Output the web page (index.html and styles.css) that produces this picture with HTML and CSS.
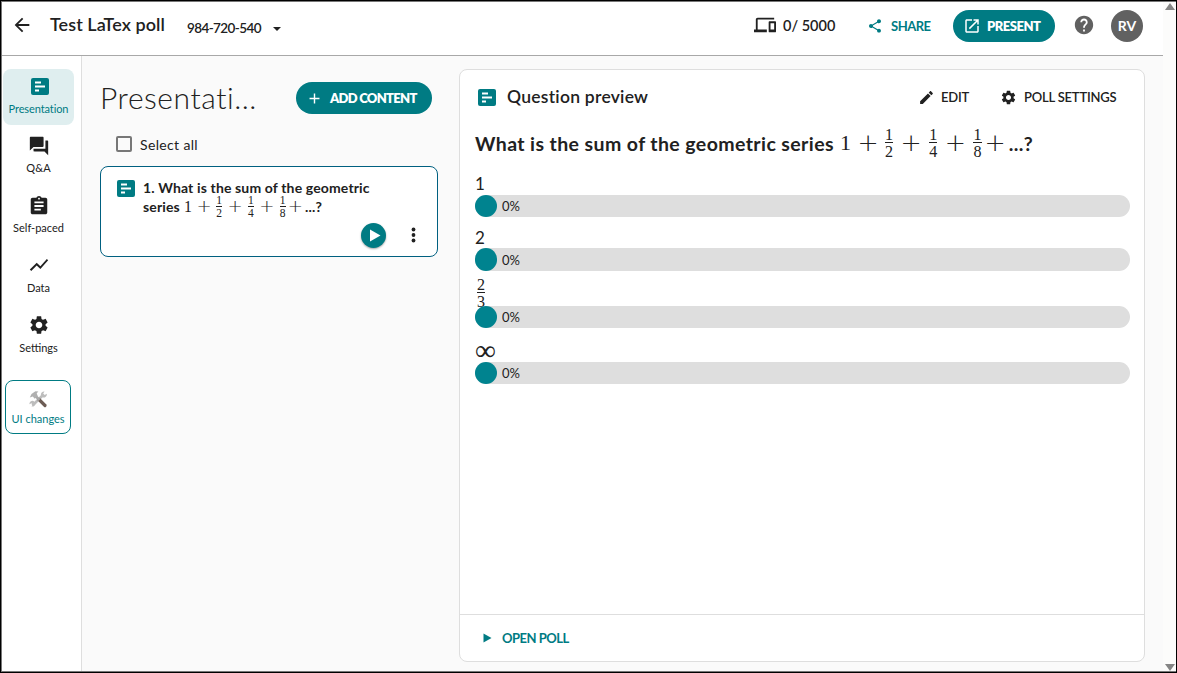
FILE: index.html
```html
<!DOCTYPE html>
<html lang="en">
<head>
  <meta charset="UTF-8" />
  <meta name="viewport" content="width=device-width, initial-scale=1.0"/>
  <title>Test LaTex poll</title>
  <link rel="stylesheet" href="styles.css">
</head>
<body>
  <!-- shared icon shapes -->
  <svg class="sprite" width="0" height="0">
    <symbol id="i-poll" viewBox="0 0 18 17"><rect width="18" height="17" rx="2" fill="currentColor"/><path d="M4 4.5h6M4 8.5h10M4 12.5h4" stroke="#fff" stroke-width="1.8"/></symbol>
    <symbol id="i-gear" viewBox="0 0 24 24"><path fill="currentColor" d="M19.14 12.94c.04-.3.06-.61.06-.94 0-.32-.02-.64-.07-.94l2.03-1.58c.18-.14.23-.41.12-.61l-1.92-3.32c-.12-.22-.37-.29-.59-.22l-2.39.96c-.5-.38-1.03-.7-1.62-.94l-.36-2.54c-.04-.24-.24-.41-.48-.41h-3.84c-.24 0-.43.17-.47.41l-.36 2.54c-.59.24-1.13.57-1.62.94l-2.39-.96c-.22-.08-.47 0-.59.22L2.74 8.87c-.12.21-.08.47.12.61l2.03 1.58c-.05.3-.09.63-.09.94s.02.64.07.94l-2.03 1.58c-.18.14-.23.41-.12.61l1.92 3.32c.12.22.37.29.59.22l2.39-.96c.5.38 1.03.7 1.62.94l.36 2.54c.05.24.24.41.48.41h3.84c.24 0 .44-.17.47-.41l.36-2.54c.59-.24 1.13-.56 1.62-.94l2.39.96c.22.08.47 0 .59-.22l1.92-3.32c.12-.22.07-.47-.12-.61l-2.01-1.58zM12 15.6c-1.98 0-3.6-1.62-3.6-3.6s1.62-3.6 3.6-3.6 3.6 1.62 3.6 3.6-1.62 3.6-3.6 3.6z"/></symbol>
  </svg>

  <div class="window">
    <div class="page">
      <header class="topbar">
        <svg class="back" width="22" height="22" viewBox="0 0 24 24"><path d="M20 11H7.83l5.59-5.59L12 4l-8 8 8 8 1.41-1.41L7.83 13H20z"/></svg>
        <h1 class="poll-name">Test LaTex poll</h1>
        <span class="poll-code">984-720-540</span>
        <span class="caret"></span>
        <div class="top-actions">
          <svg class="devices" width="22" height="22" viewBox="0 0 24 24"><path d="M4 6h18V4H4c-1.1 0-2 .9-2 2v11H0v3h14v-3H4V6zm19 2h-6c-.55 0-1 .45-1 1v10c0 .55.45 1 1 1h6c.55 0 1-.45 1-1V9c0-.55-.45-1-1-1zm-1 9h-4v-7h4v7z"/></svg>
          <span class="count">0/ 5000</span>
          <svg class="share-icon" width="16" height="16" viewBox="0 0 24 24"><path d="M18 16.08c-.76 0-1.44.3-1.96.77L8.91 12.7c.05-.23.09-.46.09-.7s-.04-.47-.09-.7l7.05-4.11c.54.5 1.25.81 2.04.81 1.66 0 3-1.34 3-3s-1.34-3-3-3-3 1.34-3 3c0 .24.04.47.09.7L8.04 9.81C7.5 9.31 6.79 9 6 9c-1.66 0-3 1.34-3 3s1.34 3 3 3c.79 0 1.5-.31 2.04-.81l7.12 4.16c-.05.21-.08.43-.08.65 0 1.61 1.31 2.92 2.92 2.92s2.92-1.31 2.92-2.92-1.31-2.92-2.92-2.92z"/></svg>
          <span class="share">SHARE</span>
          <button class="pill present">
            <svg width="18" height="18" viewBox="0 0 24 24"><path d="M19 19H5V5h7V3H5c-1.11 0-2 .9-2 2v14c0 1.1.89 2 2 2h14c1.1 0 2-.9 2-2v-7h-2v7zM14 3v2h3.59l-9.83 9.83 1.41 1.41L19 6.41V10h2V3h-7z"/></svg>
            <span>PRESENT</span>
          </button>
          <svg class="help" width="22" height="22" viewBox="0 0 24 24"><path d="M12 2C6.48 2 2 6.48 2 12s4.48 10 10 10 10-4.48 10-10S17.52 2 12 2zm1 17h-2v-2h2v2zm2.07-7.75l-.9.92C13.45 12.9 13 13.5 13 15h-2v-.5c0-1.1.45-2.1 1.17-2.83l1.24-1.26c.37-.36.59-.86.59-1.41 0-1.1-.9-2-2-2s-2 .9-2 2H8c0-2.21 1.79-4 4-4s4 1.79 4 4c0 .88-.36 1.68-.93 2.25z"/></svg>
          <span class="avatar">RV</span>
        </div>
      </header>

      <div class="body">
        <nav class="sidebar">
          <a class="nav-item active"><svg width="18" height="17"><use href="#i-poll"/></svg><span>Presentation</span></a>
          <a class="nav-item"><svg width="22" height="22" viewBox="0 0 24 24"><path d="M21 6h-2v9H6v2c0 .55.45 1 1 1h11l4 4V7c0-.55-.45-1-1-1zm-4 6V3c0-.55-.45-1-1-1H3c-.55 0-1 .45-1 1v14l4-4h10c.55 0 1-.45 1-1z"/></svg><span>Q&amp;A</span></a>
          <a class="nav-item"><svg width="22" height="22" viewBox="0 0 24 24"><path d="M19 3h-4.18C14.4 1.84 13.3 1 12 1c-1.3 0-2.4.84-2.82 2H5c-1.1 0-2 .9-2 2v14c0 1.1.9 2 2 2h14c1.1 0 2-.9 2-2V5c0-1.1-.9-2-2-2zm-7 0c.55 0 1 .45 1 1s-.45 1-1 1-1-.45-1-1 .45-1 1-1zm2 14H7v-2h7v2zm3-4H7v-2h10v2zm0-4H7V7h10v2z"/></svg><span>Self-paced</span></a>
          <a class="nav-item high"><svg width="22" height="22" viewBox="0 0 24 24"><path d="M3.5 18.49l6-6.01 4 4L22 6.92l-1.41-1.41-7.09 7.97-4-4L2 16.99z"/></svg><span>Data</span></a>
          <a class="nav-item high"><svg width="22" height="22"><use href="#i-gear"/></svg><span>Settings</span></a>
          <a class="ui-changes">
            <svg width="19" height="18" viewBox="0 0 19 18">
              <path d="M3.5 15.5L14 5" stroke="#bdbdbd" stroke-width="2.6"/>
              <path d="M12 5.5a3.2 3.2 0 0 1 3.5-4l-1.3 2 1.5 1.5 2.1-1.2a3.2 3.2 0 0 1-4 3.6zM6 12.5a3 3 0 0 1-3.5 4l1.2-1.8L2.4 13.3l-1.9.9a3 3 0 0 1 4-3.3z" fill="#bdbdbd"/>
              <path d="M10 9.500l6 6" stroke="#6d5d55" stroke-width="3.2" stroke-linecap="round"/>
              <path d="M6 5.500l4.500 4.500" stroke="#a9a9a9" stroke-width="2.6"/>
              <path d="M.8 7.600L2.500 4 6.400 1.200l3 .3-1.700 1.800 1 2.700-3 2.700-1.900-2.200z" fill="#b0b0b0"/>
            </svg>
            <span>UI changes</span>
          </a>
        </nav>

        <section class="slides">
          <div class="slides-head">
            <h2>Presentati...</h2>
            <button class="pill add"><svg width="17" height="17" viewBox="0 0 24 24"><path d="M19 13h-6v6h-2v-6H5v-2h6V5h2v6h6z"/></svg><span>ADD CONTENT</span></button>
          </div>
          <label class="select-all"><span class="box"></span><span class="select-text">Select all</span></label>
          <article class="slide">
            <svg class="poll-icon" width="18" height="17"><use href="#i-poll"/></svg>
            <div class="slide-title">
              <p class="line-one">1. What is the sum of the geometric</p>
              <div class="formula-line">
                <span class="line-two">series</span>
                <span class="math">
                  <span class="num">1</span><span class="op first">+</span>
                  <span class="frac"><span>1</span><span>2</span></span><span class="op">+</span>
                  <span class="frac"><span>1</span><span>4</span></span><span class="op">+</span>
                  <span class="frac"><span>1</span><span>8</span></span><span class="op last">+</span>
                </span>
                <span>...?</span>
              </div>
            </div>
            <div class="slide-actions">
              <span class="play"><svg width="25" height="25" viewBox="0 0 25 25"><path d="M9 6.500v12l10.500-6z"/></svg></span>
              <svg class="dots" width="5" height="16" viewBox="0 0 5 16"><circle cx="2.5" cy="2.5" r="1.900"/><circle cx="2.5" cy="8" r="1.900"/><circle cx="2.5" cy="13.5" r="1.900"/></svg>
            </div>
          </article>
        </section>

        <section class="preview">
          <div class="preview-head">
            <svg class="poll-icon" width="18" height="17"><use href="#i-poll"/></svg>
            <h3>Question preview</h3>
            <div class="preview-actions">
              <svg width="17" height="17" viewBox="0 0 24 24"><path d="M3 17.25V21h3.75L17.81 9.94l-3.75-3.75L3 17.25zM20.71 7.04c.39-.39.39-1.02 0-1.41l-2.34-2.34c-.39-.39-1.02-.39-1.41 0l-1.83 1.83 3.75 3.75 1.83-1.83z"/></svg>
              <span class="edit">EDIT</span>
              <svg class="small-gear" width="17" height="17"><use href="#i-gear"/></svg>
              <span class="poll-settings">POLL SETTINGS</span>
            </div>
          </div>

          <div class="question formula-line">
            <span class="question-text">What is the sum of the geometric series</span>
            <span class="math">
              <span class="num">1</span><span class="op first">+</span>
              <span class="frac"><span>1</span><span>2</span></span><span class="op">+</span>
              <span class="frac"><span>1</span><span>4</span></span><span class="op">+</span>
              <span class="frac"><span>1</span><span>8</span></span><span class="op last">+</span>
            </span>
            <span class="question-end">...?</span>
          </div>

          <div class="options">
            <div class="option">
              <span class="option-label">1</span>
              <div class="bar"><span class="fill"></span><span>0%</span></div>
            </div>
            <div class="option second">
              <span class="option-label">2</span>
              <div class="bar"><span class="fill"></span><span>0%</span></div>
            </div>
            <div class="option third">
              <span class="option-label"><span class="frac"><span>2</span><span>3</span></span></span>
              <div class="bar"><span class="fill"></span><span>0%</span></div>
            </div>
            <div class="option">
              <span class="option-label infinity">∞</span>
              <div class="bar"><span class="fill"></span><span>0%</span></div>
            </div>
          </div>

          <div class="preview-foot">
            <svg width="9" height="10" viewBox="0 0 9 10"><path d="M.5.5v9L8.5 5z"/></svg>
            <span>OPEN POLL</span>
          </div>
        </section>
      </div>
    </div>
    <div class="scrollbar"><span class="up"></span><span class="down"></span></div>
  </div>
</body>
</html>
```
FILE: styles.css
```css
:root {
  --teal: #007b83;
  --bar-teal: #00838f;
  --text-color: #212121;
  --line: #dedede;
  --page-bg: #fafafa;
}
* {
  box-sizing: border-box;
}
body {
  margin: 0;
  font-family: Lato, "Open Sans", sans-serif;
  color: var(--text-color);
  overflow: hidden;
}
h1, h2, h3, p {
  margin: 0;
}
svg {
  fill: currentColor;
  flex: none;
}
span, h1, h2, h3, p {
  white-space: nowrap;
}
.sprite {
  display: none;
}
.window {
  display: flex;
  height: 673px;
  border: 1px solid #000;
  box-shadow: inset 1px 1px 0 #777, inset 0 -1px 0 #777;
  padding: 1px 0 1px 1px;
}
.page {
  width: 1161px;
  display: flex;
  flex-direction: column;
}

/* top bar */
.topbar {
  display: flex;
  align-items: center;
  height: 54px;
  padding: 0 20px 6px 9px;
  background: #fff;
  border-bottom: 1px solid #a8a8a8;
}
.back {
  margin-bottom: 2px;
}
.poll-name {
  width: 115px;
  margin: 0 0 3px 17px;
  font-size: 18px;
  font-weight: 600;
  letter-spacing: 0.06px;
}
.poll-code {
  width: 75px;
  margin: 5px 0 0 22px;
  font-size: 13.5px;
  font-weight: 600;
  letter-spacing: -0.6px;
}
.caret {
  margin: 6px 0 0 11px;
  border: 4px solid transparent;
  border-top-color: var(--text-color);
  border-bottom: 0;
}
.top-actions {
  display: flex;
  align-items: center;
  margin-left: auto;
}
.devices {
  margin-bottom: 2px;
}
.count {
  width: 53px;
  margin-left: 7px;
  font-size: 14.5px;
  font-weight: 600;
}
.share-icon {
  margin-left: 31px;
  color: var(--teal);
}
.share {
  width: 41px;
  margin-left: 8px;
  font-size: 13px;
  font-weight: 700;
  letter-spacing: -0.5px;
  color: var(--teal);
}
.pill {
  display: flex;
  align-items: center;
  height: 32px;
  padding: 0;
  border: none;
  border-radius: 16px;
  background: var(--teal);
  color: #fff;
  font-family: inherit;
  font-size: 13px;
  font-weight: 800;
}
.present {
  width: 102px;
  margin-left: 21px;
  padding-left: 10px;
  gap: 6px;
  letter-spacing: -0.5px;
}
.help {
  margin: 0 0 2px 18px;
  color: #616161;
}
.avatar {
  width: 32px;
  height: 32px;
  margin-left: 16px;
  border-radius: 50%;
  background: #616161;
  color: #fff;
  font-size: 14px;
  font-weight: 700;
  line-height: 32px;
  text-align: center;
}

.body {
  display: flex;
  flex: 1;
  background: var(--page-bg);
}

/* left navigation */
.sidebar {
  width: 80px;
  padding: 13px 0 0 1px;
  background: #fff;
  border-right: 1px solid var(--line);
}
.nav-item,
.ui-changes {
  display: flex;
  flex-direction: column;
  align-items: center;
  width: 71px;
  height: 56px;
  margin-bottom: 4px;
  padding-top: 6px;
  border-radius: 8px;
  font-size: 11px;
  line-height: 14px;
}
.nav-item span {
  margin-top: 4px;
}
.nav-item.high {
  padding-top: 5px;
}
.nav-item.high span {
  margin-top: 5px;
}
.nav-item.active {
  padding-top: 9px;
  background: #dfeeef;
  color: var(--teal);
}
.nav-item.active svg {
  margin-left: 2px;
}
.nav-item.active span {
  margin-top: 7px;
  letter-spacing: -0.1px;
}
.ui-changes {
  width: 66px;
  height: 54px;
  margin: 15px 0 0 2px;
  padding-top: 9px;
  border: 1px solid var(--teal);
  color: var(--teal);
}
.ui-changes span {
  margin-top: 4px;
}

/* slide list */
.slides {
  width: 338px;
  margin-left: 18px;
  padding-top: 26px;
}
.slides-head {
  display: flex;
  align-items: center;
}
.slides-head h2 {
  width: 196px;
  height: 32px;
  font-size: 30px;
  font-weight: 300;
  letter-spacing: 0.55px;
  line-height: 30px;
}
.add {
  width: 136px;
  padding-left: 10px;
  gap: 7px;
  letter-spacing: -0.7px;
}
.select-all {
  display: flex;
  align-items: center;
  gap: 8px;
  margin: 22px 0 14px 16px;
  height: 16px;
  font-size: 14px;
  letter-spacing: 0.35px;
}
.box {
  width: 16px;
  height: 16px;
  border: 2px solid #777;
  border-radius: 2px;
}
.slide {
  display: grid;
  grid-template-columns: 18px 1fr;
  grid-template-rows: 45px 25px;
  column-gap: 8px;
  align-items: start;
  height: 91px;
  padding: 11px 17px 0 16px;
  background: #fff;
  border: 1px solid #006080;
  border-radius: 8px;
}
.poll-icon {
  color: var(--teal);
}
.slide .poll-icon {
  margin-top: 2px;
}
.slide-title {
  font-size: 14px;
  font-weight: 700;
  letter-spacing: 0.14px;
  line-height: 19px;
}
.slide-title .formula-line {
  height: 19px;
}
.slide-title .math {
  margin-left: 4px;
  font-size: 15.8px;
}
.slide-actions {
  grid-column: 2;
  display: flex;
  justify-content: flex-end;
  align-items: center;
}
.play {
  display: flex;
  width: 25px;
  height: 25px;
  border-radius: 50%;
  background: var(--teal);
  color: #fff;
  box-shadow: 0 1px 2px rgba(0, 0, 0, 0.35);
}
.dots {
  margin: 0 4px 1px 25px;
}

/* formulas */
.formula-line {
  display: flex;
  align-items: center;
}
.math {
  display: flex;
  align-items: center;
  font-family: "Liberation Serif", serif;
  font-weight: 400;
  letter-spacing: 0;
}
.num {
  width: 0.5em;
}
.op {
  width: 1.435em;
  font-family: "DejaVu Sans", sans-serif;
  font-size: 1.15em;
  font-weight: 200;
  line-height: 1;
  text-align: center;
}
.op.first {
  width: 1.35em;
}
.op.last {
  width: 1.08em;
}
.frac {
  display: inline-flex;
  flex-direction: column;
  align-items: center;
  width: 0.36em;
  font-family: "Liberation Serif", serif;
}
.frac span {
  font-size: 0.73em;
  line-height: 0.95em;
}
.frac span + span {
  border-top: 1px solid var(--text-color);
  padding-top: 1px;
}

/* question preview */
.preview {
  display: flex;
  flex-direction: column;
  width: 686px;
  height: 593px;
  margin: 13px 0 0 21px;
  background: #fff;
  border: 1px solid var(--line);
  border-radius: 8px;
}
.preview-head {
  display: flex;
  align-items: center;
  height: 54px;
  padding: 0 28px 0 18px;
}
.preview-head h3 {
  margin: 0 0 2px 11px;
  font-size: 17.5px;
  font-weight: 600;
  letter-spacing: 0.25px;
}
.preview-actions {
  display: flex;
  align-items: center;
  margin-left: auto;
  font-size: 13px;
  font-weight: 600;
  letter-spacing: -0.2px;
}
.edit {
  width: 28px;
  margin-left: 6px;
}
.small-gear {
  margin-left: 31px;
}
.poll-settings {
  width: 92px;
  margin-left: 7px;
}
.question {
  height: 38px;
  padding-left: 15px;
  font-size: 19.5px;
  font-weight: 700;
}
.question-text {
  width: 360px;
  letter-spacing: 0.4px;
}
.question-end {
  letter-spacing: 0.4px;
}
.question .math {
  margin-left: 5px;
  font-size: 22px;
}
.options {
  flex: 1;
  padding: 10px 14px 0 15px;
}
.option-label {
  display: flex;
  align-items: center;
  height: 23px;
  font-size: 17px;
}
.bar {
  display: flex;
  align-items: center;
  height: 22px;
  margin-bottom: 9px;
  border-radius: 11px;
  background: #dedede;
  font-size: 13px;
}
.fill {
  width: 22px;
  height: 100%;
  margin-right: 5px;
  border-radius: 11px;
  background: var(--bar-teal);
}
.option.second .option-label {
  height: 22px;
}
.option.second .bar {
  height: 23px;
}
.third .option-label {
  height: 26px;
  padding-left: 2px;
  font-size: 22px;
}
.option-label.infinity {
  height: 25px;
  padding-top: 2px;
  font-family: "Liberation Serif", serif;
  font-size: 29px;
}
.preview-foot {
  display: flex;
  align-items: center;
  height: 47px;
  padding-left: 23px;
  gap: 10px;
  border-top: 1px solid var(--line);
  color: var(--teal);
  font-size: 13px;
  font-weight: 700;
  letter-spacing: -0.5px;
}

.scrollbar {
  display: flex;
  flex-direction: column;
  justify-content: space-between;
  align-items: center;
  flex: 1;
  padding: 1px 0 0;
  background: #fcfcfb;
}
.up,
.down {
  border: 5px solid transparent;
}
.up {
  border-top: 0;
  border-bottom: 7px solid #858585;
}
.down {
  border-bottom: 0;
  border-top: 7px solid #858585;
}
```
